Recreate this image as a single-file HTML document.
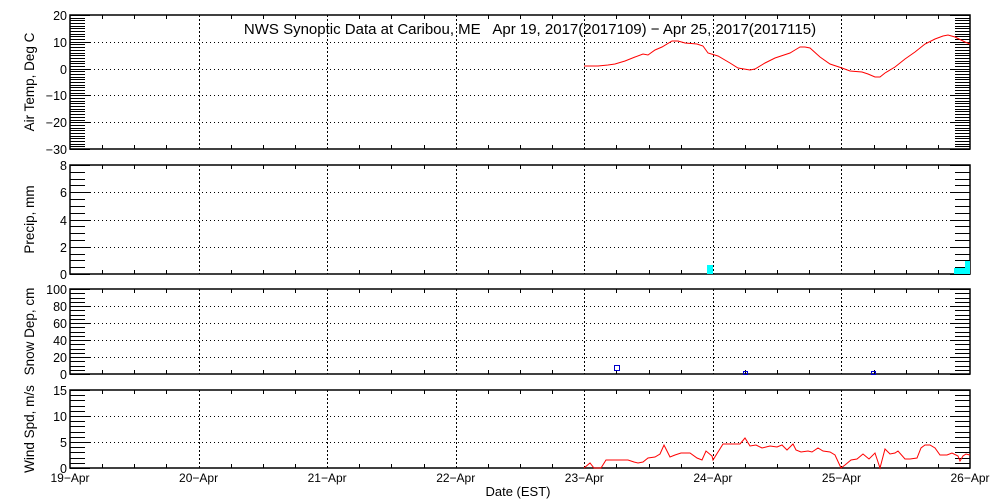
<!DOCTYPE html><html><head><style>body{margin:0;background:#fff}svg{display:block}text{font-family:"Liberation Sans",sans-serif;font-size:12px;fill:#000}</style></head><body>
<svg id="s" width="1000" height="500" xmlns="http://www.w3.org/2000/svg"></svg>
<script>
var s=document.getElementById('s'),h='';
var L=70,R=970,day=(R-L)/7;
var P=[{t:15,b:149,min:-30,max:20,maj:10,mn:1,lab:'Air Temp, Deg C'},
{t:165,b:274,min:0,max:8,maj:2,mn:0.5,lab:'Precip, mm'},
{t:289,b:374,min:0,max:100,maj:20,mn:5,lab:'Snow Dep, cm'},
{t:390,b:468,min:0,max:15,maj:5,mn:1,lab:'Wind Spd, m/s'}];
P.forEach(function(p){
 function Y(v){return p.b-(v-p.min)/(p.max-p.min)*(p.b-p.t);}
 h+='<rect x="'+L+'" y="'+p.t+'" width="'+(R-L)+'" height="'+(p.b-p.t)+'" fill="none" stroke="#000" stroke-width="1.5"/>';
 for(var v=p.min;v<=p.max+1e-6;v+=p.mn){var y=Math.round(Y(v))+0.5;
  var isM=Math.abs(v/p.maj-Math.round(v/p.maj))<1e-6;
  h+='<line x1="'+L+'" x2="'+(L+(isM?20:15))+'" y1="'+y+'" y2="'+y+'" stroke="#000"/>';
  h+='<line x1="'+(R-(isM?20:15))+'" x2="'+R+'" y1="'+y+'" y2="'+y+'" stroke="#000"/>';
  if(isM){h+='<text x="67" y="'+(y+4.5)+'" text-anchor="end" style="font-size:12.5px">'+(v<0?'\u2212'+(-v):v)+'</text>';
   if(v>p.min&&v<p.max)h+='<line x1="'+L+'" x2="'+R+'" y1="'+y+'" y2="'+y+'" stroke="#000" stroke-dasharray="1,3"/>';}
 }
 for(var i=1;i<28;i++){var x=Math.round(L+i*day/4)+0.5;
  if(i%4==0)h+='<line x1="'+x+'" x2="'+x+'" y1="'+p.t+'" y2="'+p.b+'" stroke="#000" stroke-dasharray="2,2"/>';
  else{h+='<line x1="'+x+'" x2="'+x+'" y1="'+p.t+'" y2="'+(p.t+4)+'" stroke="#000"/><line x1="'+x+'" x2="'+x+'" y1="'+p.b+'" y2="'+(p.b-4)+'" stroke="#000"/>';}
 }
 var cy=(p.t+p.b)/2;
 h+='<text transform="translate(34,'+cy+') rotate(-90)" text-anchor="middle" style="font-size:13.5px">'+p.lab+'</text>';
});
var days=['19','20','21','22','23','24','25','26'];
days.forEach(function(d,i){h+='<text x="'+(L+i*day)+'" y="482" text-anchor="middle">'+d+'\u2212Apr</text>';});
h+='<text x="518" y="496" text-anchor="middle" style="font-size:13px">Date (EST)</text>';
h+='<text x="530" y="34" text-anchor="middle" style="font-size:15px" xml:space="preserve">NWS Synoptic Data at Caribou, ME   Apr 19, 2017(2017109) \u2212 Apr 25, 2017(2017115)</text>';
var T="584,66 590,66 598,66 608,65 615,64 625,61 635,57 643,54 648,55 655,50 662,47 672,41 678,41 685,43 697,44 703,46 708,53 718,56 730,63 738,68 750,70 755,69 765,63 775,58 790,53 795,50 800,47 805,47 810,48 820,57 830,64 842,68 850,71 862,72 868,74 875,77 880,77 885,73 895,67 905,59 915,52 925,44 935,39 943,36 948,35 955,37 965,42 970,44";
h+='<polyline points="'+T+'" fill="none" stroke="#f00"/>';
var W="584,466 590,461 594,466 601,466 606,458 628,458 634,460 638,461 643,460 648,456 655,455 660,452 664,443 667,449 670,455 675,453 681,451 690,451 697,456 702,458 706,449 712,454 713,458 718,450 723,442 740,442 745,436 750,444 756,443 762,446 770,444 777,445 782,443 787,448 793,442 796,448 801,450 808,449 812,450 818,446 823,449 830,450 835,453 841,466 845,463 851,458 857,457 863,452 869,457 875,451 880,466 885,447 890,452 895,451 898,449 905,457 910,457 917,456 921,446 925,443 930,443 935,446 940,453 947,453 952,451 958,454 960,459 963,454 966,452 970,453".split(' ').map(function(q){var a=q.split(',');return a[0]+','+(+a[1]+2);}).join(' ');
h+='<polyline points="'+W+'" fill="none" stroke="#f00"/>';
h+='<rect x="707" y="265" width="6" height="9" fill="#0ff"/><rect x="954" y="268" width="16" height="6" fill="#0ff"/><rect x="965" y="261" width="5" height="7" fill="#0ff"/>';
h+='<rect x="614.5" y="365.5" width="5" height="5" fill="none" stroke="#00c"/><rect x="743.5" y="371.5" width="4" height="3" fill="none" stroke="#00c"/><rect x="871.5" y="371.5" width="4" height="3" fill="none" stroke="#00c"/>';
s.innerHTML=h;
</script></body></html>
